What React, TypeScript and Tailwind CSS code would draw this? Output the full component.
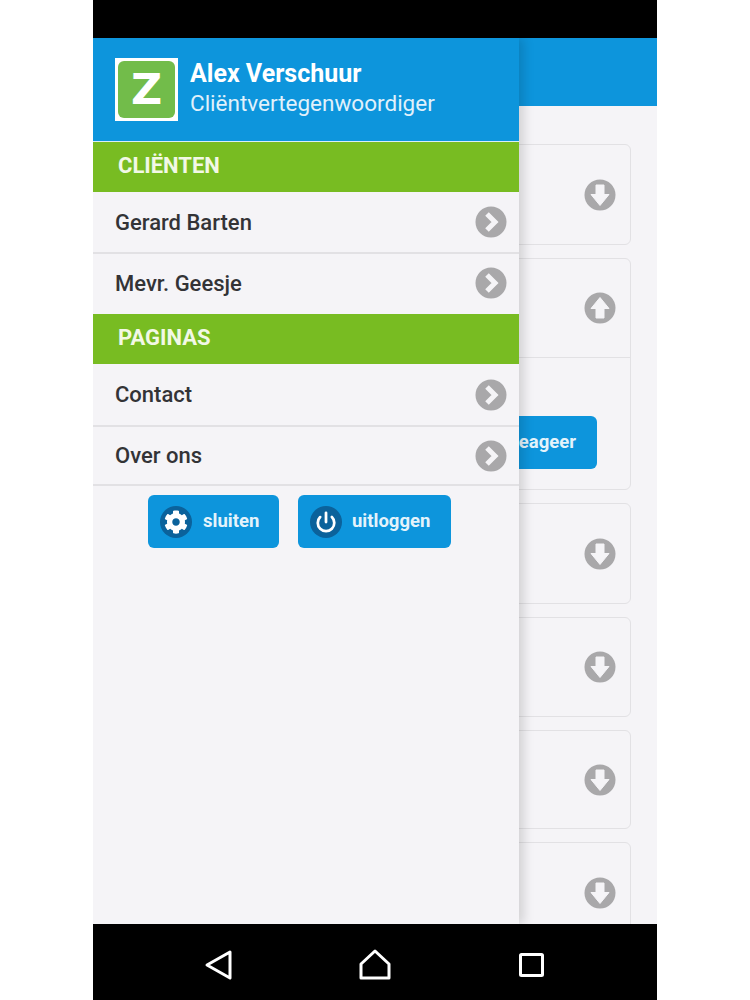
import React from 'react';
import { FaCog } from 'react-icons/fa';
import { Power } from 'lucide-react';

const font = { fontFamily: 'Roboto, "Noto Sans", sans-serif' };

function CircleArrow({ up }: { up?: boolean }) {
  return (
    <svg width="32" height="32" viewBox="0 0 32 32">
      <circle cx="16" cy="16" r="15.5" fill="#a9a8aa" />
      <path
        d="M12 6 H20 V15.5 H25 L16 26.5 L7 15.5 H12 Z"
        fill="#f5f4f7"
        stroke="#f5f4f7"
        strokeLinejoin="round"
        transform={up ? 'rotate(180 16 16)' : undefined}
      />
    </svg>
  );
}

function CircleChevron() {
  return (
    <svg width="32" height="32" viewBox="0 0 32 32" className="shrink-0">
      <circle cx="16" cy="16" r="15.5" fill="#a9a8aa" />
      <path d="M12 8 L20 16 L12 24" fill="none" stroke="#f5f4f7" strokeWidth="5" />
    </svg>
  );
}

function Card({ up, children, className }: { up?: boolean; children?: React.ReactNode; className: string }) {
  return (
    <div className="border border-[#e2e1e4] rounded-md">
      <div className={`flex items-center justify-end pr-[14px] ${className}`}>
        <CircleArrow up={up} />
      </div>
      {children}
    </div>
  );
}

function MenuRow({ label, className }: { label: string; className: string }) {
  return (
    <div className={`flex items-center justify-between pl-[22px] pr-[12px] border-[#e2e1e4] ${className}`}>
      <span className="text-[22px] font-medium text-[#333336]">{label}</span>
      <CircleChevron />
    </div>
  );
}

function Section({ label }: { label: string }) {
  return (
    <div className="h-[50px] bg-[#78bc22] flex items-center pl-[25px] pb-1 text-[22px] font-bold text-[#f2f8e6]">
      {label}
    </div>
  );
}

export default function App() {
  return (
    <div className="w-[750px] h-[1000px] bg-white pl-[93px]" style={font}>
      <div className="w-[564px] h-full flex flex-col">
        <div className="h-[38px] bg-black shrink-0" />

        <div className="relative flex-1 overflow-hidden bg-[#f5f4f7]">
          {/* page behind the drawer */}
          <div className="h-[68px] bg-[#0d95dc]" />
          <div className="pt-[38px] pl-[300px] pr-[26px] flex flex-col gap-[13px]">
            <Card className="h-[99px]" />
            <Card up className="h-[98px]">
              <div className="h-[132px] border-t border-[#e2e1e4] pt-[58px] pl-[80px]">
                <div className="w-[123px] h-[53px] bg-[#0d95dc] rounded-md flex items-center justify-end pr-[21px] text-[18.5px] font-bold text-[#e4f3fb]">
                  Reageer
                </div>
              </div>
            </Card>
            <Card className="h-[99px]" />
            <Card className="h-[98px]" />
            <Card className="h-[97px]" />
            <Card className="h-[99px]" />
          </div>

          {/* drawer */}
          <div className="absolute top-0 left-0 bottom-0 w-[426px] bg-[#f5f4f7] shadow-[5px_0_10px_rgba(0,0,0,0.14)]">
            <div className="h-[103px] bg-[#0d95dc] flex items-center pl-[22px] gap-[12px]">
              <div className="w-[63px] h-[63px] bg-white p-[3px]">
                <div
                  className="w-full h-full bg-[#72bc4a] rounded-md flex items-center justify-center text-[43px] leading-none font-bold text-white"
                  style={{ fontFamily: '"DejaVu Sans", sans-serif' }}
                >
                  Z
                </div>
              </div>
              <div className="text-white pb-1">
                <div className="text-[25px] leading-[30px] font-bold">Alex Verschuur</div>
                <div className="text-[22.5px] leading-[28px] text-[#e0f1fb]">Cliëntvertegenwoordiger</div>
              </div>
            </div>
            <div className="h-px bg-[#d8eef8]" />
            <Section label="CLIËNTEN" />
            <MenuRow label="Gerard Barten" className="h-[62px] border-b-2" />
            <MenuRow label="Mevr. Geesje" className="h-[60px] pb-[2px]" />
            <Section label="PAGINAS" />
            <MenuRow label="Contact" className="h-[63px] border-b-2" />
            <MenuRow label="Over ons" className="h-[59px] border-b-2" />
            <div className="flex gap-[19px] pt-[9px] pl-[55px]">
              <div className="w-[131px] h-[53px] bg-[#0d95dc] rounded-md flex items-center pl-[12px] gap-[11px] text-[18.5px] font-bold text-[#e4f3fb]">
                <span className="w-[32px] h-[32px] rounded-full bg-[#0b629b] flex items-center justify-center">
                  <FaCog className="text-[24px] text-white" />
                </span>
                sluiten
              </div>
              <div className="w-[153px] h-[53px] bg-[#0d95dc] rounded-md flex items-center pl-[12px] gap-[10px] text-[18.5px] font-bold text-[#e4f3fb]">
                <span className="w-[32px] h-[32px] rounded-full bg-[#0b629b] flex items-center justify-center">
                  <Power size={22} strokeWidth={3} className="text-white" />
                </span>
                uitloggen
              </div>
            </div>
          </div>
        </div>

        <div className="h-[76px] bg-black shrink-0 relative flex items-center">
          <svg width="564" height="76" viewBox="0 0 564 76" fill="none" stroke="white" strokeWidth="3" strokeLinejoin="round">
            <path d="M137 28 L114 41 L137 54 Z" />
            <path d="M282 27 L296 40 V54 H268 V40 Z" />
            <rect x="427.5" y="30.5" width="22" height="21" rx="1" />
          </svg>
        </div>
      </div>
    </div>
  );
}
